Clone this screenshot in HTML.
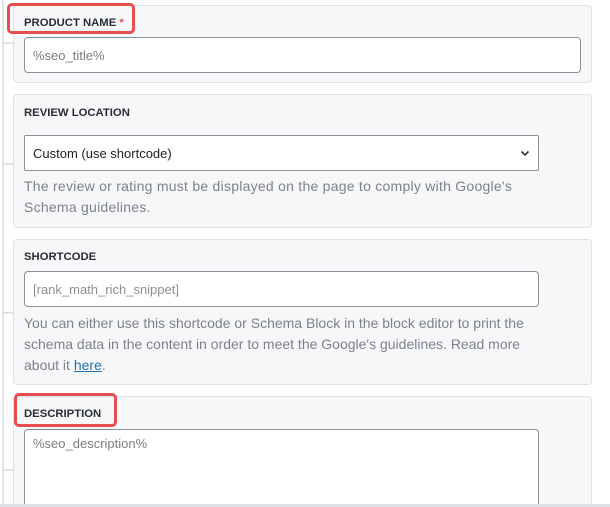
<!DOCTYPE html>
<html><head><style>
*{box-sizing:border-box;margin:0;padding:0}
html,body{width:610px;height:507px;overflow:hidden}
body{background:#fff;font-family:"Liberation Sans",sans-serif;position:relative}
.rail{position:absolute;left:2px;top:0;width:2px;height:507px;background:#e0e3e7}
.tick{position:absolute;left:2px;width:11px;height:2px;background:#e0e3e7}
.panel{position:absolute;left:13px;width:579px;background:#f6f7f9;border:1px solid #dfe2e6;border-radius:4px}
.lbl{position:absolute;left:24px;font-size:11.3px;font-weight:bold;color:#2a2d31}
.inp{position:absolute;left:24px;background:#fff;border:1px solid #8c8f94;border-radius:4px;font-size:13px;color:#7a7d82;padding-left:8px;display:flex;align-items:center}
.help{position:absolute;left:24px;font-size:14px;line-height:21px;color:#7e8288;white-space:nowrap}
.red{position:absolute;border:3px solid #e54e4e;border-radius:5px}
</style></head><body>
<div class="rail"></div>
<div class="tick" style="top:42px"></div>
<div class="tick" style="top:163px"></div>
<div class="tick" style="top:312px"></div>
<div class="tick" style="top:469px"></div>

<div class="panel" style="top:5px;height:78px"></div>
<div class="lbl" style="top:17px">PRODUCT NAME <span style="color:#e54e4e">*</span></div>
<div class="inp" style="top:37px;width:557px;height:36px">%seo_title%</div>

<div class="panel" style="top:94px;height:134px"></div>
<div class="lbl" style="top:107px">REVIEW LOCATION</div>
<div class="inp" style="top:135px;width:515px;height:36px;color:#1e1e1e;border-radius:2px">Custom (use shortcode)
<svg style="position:absolute;right:8px;top:14px" width="10" height="7" viewBox="0 0 10 7"><path d="M1.5 1.5L5 5L8.5 1.5" fill="none" stroke="#333" stroke-width="1.6"/></svg></div>
<div class="help" style="top:176px;letter-spacing:0.25px">The review or rating must be displayed on the page to comply with Google's<br>Schema guidelines.</div>

<div class="panel" style="top:239px;height:146px"></div>
<div class="lbl" style="top:251px">SHORTCODE</div>
<div class="inp" style="top:271px;width:515px;height:36px;color:#8c8f94">[rank_math_rich_snippet]</div>
<div class="help" style="top:313px">You can either use this shortcode or Schema Block in the block editor to print the<br>schema data in the content in order to meet the Google's guidelines. Read more<br>about it <span style="color:#2271b1;text-decoration:underline">here</span>.</div>

<div class="panel" style="top:396px;height:120px"></div>
<div class="lbl" style="top:408px">DESCRIPTION</div>
<div class="inp" style="top:429px;width:515px;height:85px;align-items:flex-start;padding-top:6px">%seo_description%</div>
<div style="position:absolute;left:0;top:504px;width:610px;height:3px;background:#dfe2e6"></div>

<div class="red" style="left:7px;top:3px;width:128px;height:31px"></div>
<div class="red" style="left:14px;top:393px;width:103px;height:34px"></div>
</body></html>
